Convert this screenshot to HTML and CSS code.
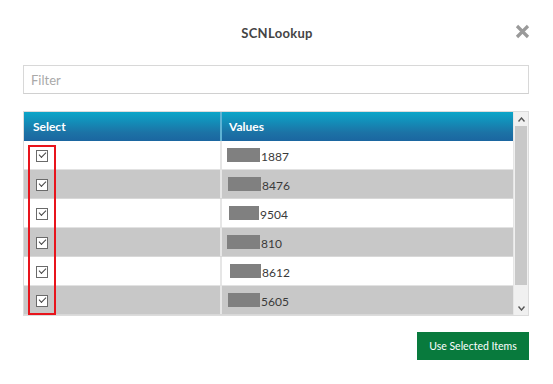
FILE: index.html
```html
<!DOCTYPE html>
<html>
<head>
<meta charset="utf-8">
<link rel="stylesheet" href="styles.css">
</head>
<body>
<div class="dialog">
  <div class="head">
    <span></span>
    <h1 class="title">SCNLookup</h1>
    <span class="close"><svg width="15" height="15" viewBox="0 0 15 15"><path d="M2 2 L13 13 M13 2 L2 13" stroke="#9a9a9a" stroke-width="3.2" stroke-linecap="butt"/></svg></span>
  </div>
  <input class="filter" type="text" placeholder="Filter">
  <div class="grid-wrap">
    <div class="table">
      <div class="row hdr"><div class="c1">Select</div><div class="c2">Values</div></div>
      <div class="row"><div class="c1"><span class="cb"></span></div><div class="c2"><span class="mask" style="margin-left:5px"></span>1887</div></div>
      <div class="row alt"><div class="c1"><span class="cb"></span></div><div class="c2"><span class="mask" style="margin-left:6px"></span>8476</div></div>
      <div class="row"><div class="c1"><span class="cb"></span></div><div class="c2"><span class="mask" style="margin-left:7px;width:30px"></span>9504</div></div>
      <div class="row alt"><div class="c1"><span class="cb"></span></div><div class="c2"><span class="mask" style="margin-left:5px"></span>810</div></div>
      <div class="row"><div class="c1"><span class="cb"></span></div><div class="c2"><span class="mask" style="margin-left:8px;width:31px"></span>8612</div></div>
      <div class="row alt"><div class="c1"><span class="cb"></span></div><div class="c2"><span class="mask" style="margin-left:6px;width:32px"></span>5605</div></div>
      <div class="redbox"></div>
    </div>
    <div class="scroll">
      <div class="arrow"><svg width="7" height="5" viewBox="0 0 7 5"><path d="M0.5 4.5 L3.5 1 L6.5 4.5" fill="none" stroke="#555" stroke-width="1.4"/></svg></div>
      <div class="thumb"></div>
      <div class="track"></div>
      <div class="arrow"><svg width="7" height="5" viewBox="0 0 7 5"><path d="M0.5 0.5 L3.5 4 L6.5 0.5" fill="none" stroke="#555" stroke-width="1.4"/></svg></div>
    </div>
  </div>
  <div class="foot">
    <button class="use">Use Selected Items</button>
  </div>
</div>
</body>
</html>
```
FILE: styles.css
```css
html, body {
  margin: 0;
  padding: 0;
  background: #fff;
}
body {
  font-family: "Lato", "Open Sans", sans-serif;
  color: #333;
}
.dialog {
  padding: 23px 24px 0 23px;
  width: 506px;
}
.head {
  display: grid;
  grid-template-columns: 1fr auto 1fr;
  align-items: center;
  height: 20px;
}
.title {
  margin: 0;
  font-size: 13px;
  font-weight: 700;
  color: #444;
  letter-spacing: 0.3px;
  padding-left: 2px;
}
.close {
  justify-self: end;
  margin-right: -1px;
  margin-top: -4px;
  display: flex;
}
.filter {
  display: block;
  box-sizing: border-box;
  width: 506px;
  height: 29px;
  margin-top: 22px;
  border: 1px solid #d8d8d8;
  border-bottom-color: #d0d0d0;
  padding: 0 7px;
  font-family: "Lato", sans-serif;
  font-size: 13px;
  color: #333;
  outline: none;
}
.filter::placeholder {
  color: #a9a9a9;
}
.grid-wrap {
  margin-top: 17px;
  display: flex;
  border: 1px solid #dcdcdc;
  width: 504px;
  height: 203px;
}
.table {
  position: relative;
  width: 490px;
}
.row {
  display: grid;
  grid-template-columns: 196px 1fr;
  height: 29px;
  box-sizing: border-box;
  border-bottom: 1px solid #e2e2e2;
  background: #fff;
}
.row.alt {
  background: #c8c8c8;
  border-bottom-color: #d8d8d8;
}
.row:last-of-type {
  border-bottom: none;
}
.c1, .c2 {
  display: flex;
  align-items: center;
  font-size: 12px;
  color: #3a3a3a;
}
.c1 {
  padding-left: 12px;
}
.c2 {
  border-left: 2px solid #e6e6e6;
  padding-left: 0;
  padding-top: 2px;
}
.row.hdr {
  background: linear-gradient(#0ba6c9, #1c73a6 70%, #1b66a0);
  border-bottom: none;
}
.hdr .c1, .hdr .c2 {
  color: #fff;
  font-weight: 700;
  font-size: 12px;
  padding-top: 0;
}
.hdr .c1 {
  padding-left: 9px;
}
.hdr .c2 {
  border-left: 2px solid #5fb3d4;
  padding-left: 7px;
}
.cb {
  width: 10px;
  height: 10px;
  border: 1px solid #6a6a6a;
  background: #fff;
  position: relative;
  margin-top: 1px;
}
.cb::after {
  content: "";
  position: absolute;
  left: 2px;
  top: 1px;
  width: 6px;
  height: 3px;
  border-left: 1px solid #444;
  border-bottom: 1px solid #444;
  transform: rotate(-45deg);
}
.mask {
  display: inline-block;
  width: 33px;
  height: 14px;
  background: #808080;
  margin-right: 1px;
  margin-top: -2px;
}
.redbox {
  position: absolute;
  left: 4px;
  top: 33px;
  width: 24px;
  height: 166px;
  border: 2px solid #e8141c;
}
.scroll {
  width: 14px;
  display: flex;
  flex-direction: column;
  background: #f0f0f0;
  border-left: 1px solid #e6e6e6;
}
.arrow {
  height: 14px;
  display: flex;
  align-items: center;
  justify-content: center;
}
.thumb {
  height: 159px;
  background: #c8c8c8;
  margin: 0 1px;
}
.track {
  flex: 1;
}
.foot {
  display: flex;
  justify-content: flex-end;
  margin-top: 16px;
}
.use {
  width: 112px;
  height: 28px;
  border: none;
  background: #087a3d;
  color: #fff;
  font-family: "Lato", sans-serif;
  font-size: 10.5px;
  padding: 0;
  margin-right: 0;
}
```
